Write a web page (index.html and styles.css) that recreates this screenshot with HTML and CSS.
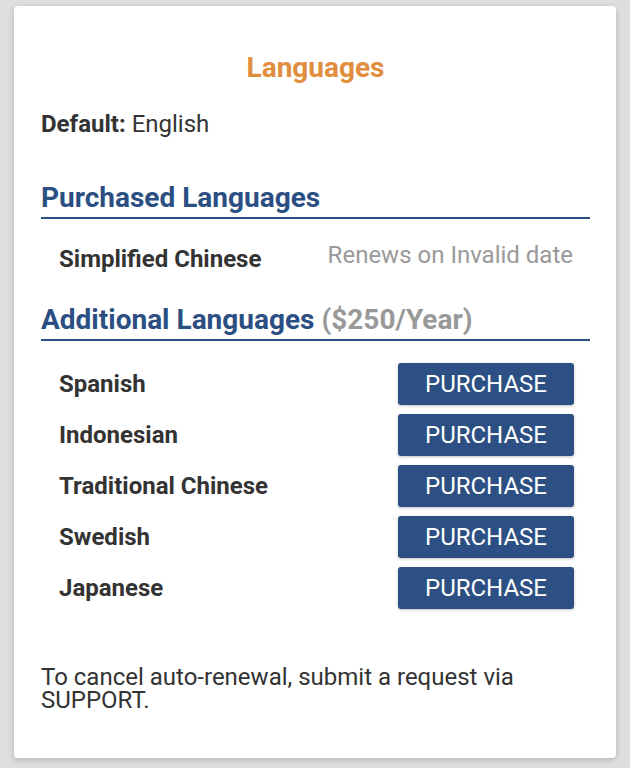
FILE: index.html
```html
<!DOCTYPE html>
<html>
<head>
<meta charset="utf-8">
<link rel="stylesheet" href="styles.css">
</head>
<body>
<div class="card">
  <h1 class="title">Languages</h1>
  <p class="default"><b>Default:</b> English</p>

  <h2 class="section">Purchased Languages</h2>
  <div class="purchased-row">
    <span class="lang">Simplified Chinese</span>
    <span class="renew">Renews on Invalid date</span>
  </div>

  <h2 class="section section-additional">Additional Languages <span class="price">($250/Year)</span></h2>
  <div class="list">
    <div class="row"><span class="lang">Spanish</span><button class="btn">PURCHASE</button></div>
    <div class="row"><span class="lang">Indonesian</span><button class="btn">PURCHASE</button></div>
    <div class="row"><span class="lang">Traditional Chinese</span><button class="btn">PURCHASE</button></div>
    <div class="row"><span class="lang">Swedish</span><button class="btn">PURCHASE</button></div>
    <div class="row"><span class="lang">Japanese</span><button class="btn">PURCHASE</button></div>
  </div>

  <p class="note">To cancel auto-renewal, submit a request via<br>SUPPORT.</p>
</div>
</body>
</html>
```

FILE: styles.css
```css
html, body {
  margin: 0;
  padding: 0;
}
body {
  background: #dedede;
  font-family: Roboto, "Liberation Sans", sans-serif;
  color: #333;
  padding: 6px 14px 10px 14px;
}
.card {
  background: #fff;
  border-radius: 4px;
  box-shadow: 0 2px 6px rgba(0,0,0,0.18);
  padding: 46px 26px 46px 27px;
  height: 752px;
  box-sizing: border-box;
}
.title {
  margin: 0;
  font-size: 28px;
  line-height: 32px;
  font-weight: 700;
  color: #e08e3e;
  text-align: center;
}
.default {
  margin: 26px 0 0 0;
  font-size: 24px;
  line-height: 28px;
}
.default b {
  font-weight: 700;
}
.section {
  margin: 44px 0 0 0;
  font-size: 28px;
  line-height: 32px;
  font-weight: 700;
  color: #2b4f82;
  padding-bottom: 3px;
  border-bottom: 2px solid #2b4f82;
}
.section-additional {
  margin-top: 31px;
}
.price {
  color: #999;
}
.purchased-row {
  margin-top: 26px;
  display: flex;
  justify-content: space-between;
  align-items: flex-start;
  padding: 0 17px 0 18px;
  font-size: 24px;
  line-height: 28px;
}
.lang {
  font-weight: 700;
  font-size: 24px;
}
.renew {
  color: #999;
  margin-top: -4px;
}
.list {
  margin-top: 22px;
  display: flex;
  flex-direction: column;
  gap: 9px;
}
.row {
  display: flex;
  justify-content: space-between;
  align-items: center;
  padding: 0 16px 0 18px;
}
.btn {
  width: 176px;
  height: 42px;
  border: none;
  border-radius: 3px;
  background: #2c5083;
  color: #fff;
  font-family: Roboto, "Liberation Sans", sans-serif;
  font-size: 24px;
  font-weight: 400;
  padding: 0;
  box-shadow: 0 1px 3px rgba(0,0,0,0.25);
}
.note {
  margin: 57px 0 0 0;
  font-size: 24px;
  line-height: 23px;
}
```
